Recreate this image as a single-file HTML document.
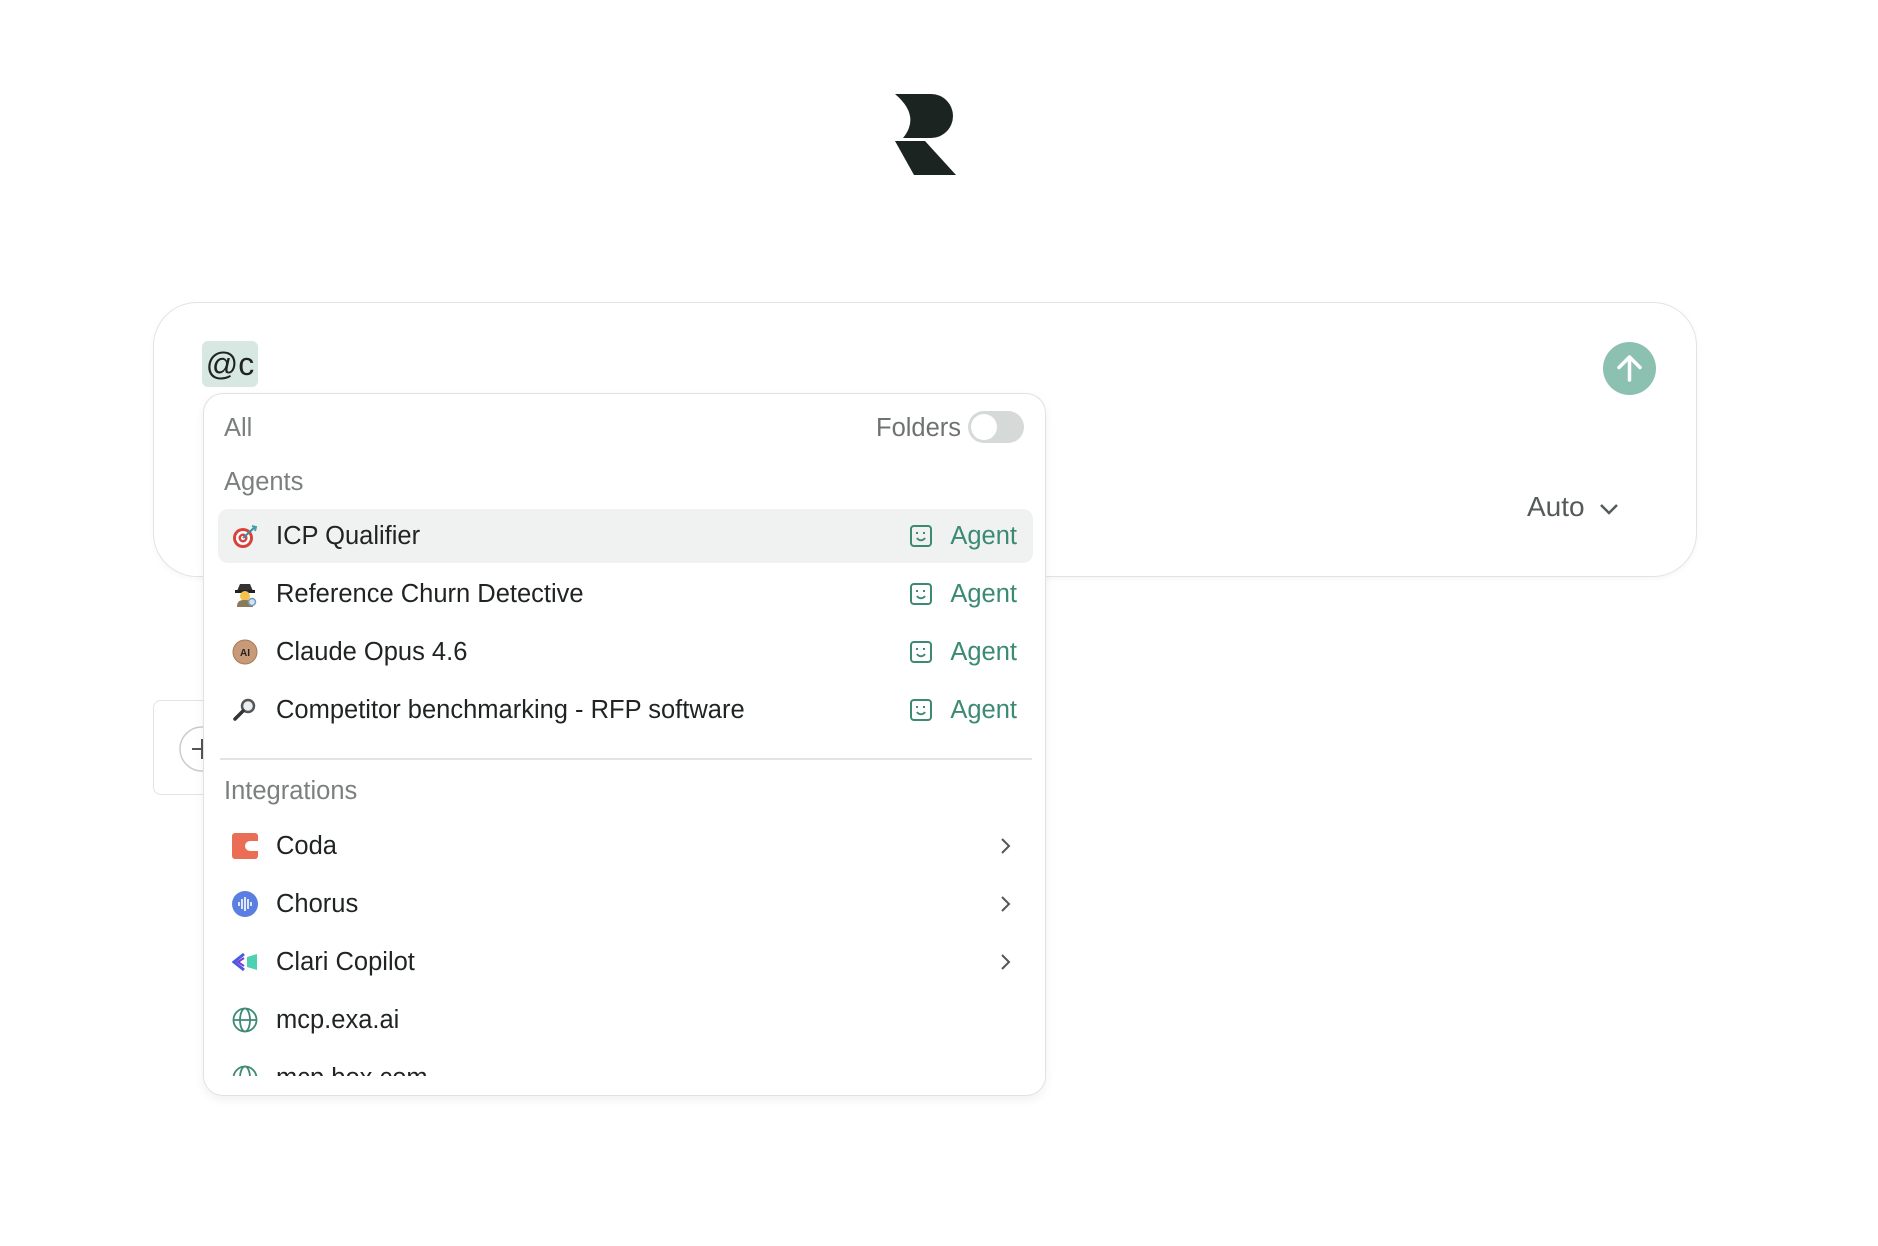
<!DOCTYPE html>
<html><head><meta charset="utf-8"><style>
*{box-sizing:border-box;margin:0;padding:0}
body{width:1878px;height:1246px;background:#fff;position:relative;overflow:hidden;font-family:"Liberation Sans",sans-serif;color:#1f2322}
.abs{position:absolute}
.main{left:153px;top:302px;width:1544px;height:275px;border:1.5px solid #e1e4e3;border-radius:44px;box-shadow:0 2px 6px rgba(0,0,0,.04)}
.chip{left:202px;top:341px;width:56px;height:46px;background:#d7e8e2;border-radius:6px;font-size:32px;line-height:46px;text-align:center;color:#1f2322}
.send{left:1603px;top:342px;width:53px;height:53px;border-radius:50%;background:#8cc0b0}
.auto{left:1527px;top:491px;font-size:28px;color:#555b59}
.back{left:153px;top:700px;width:60px;height:95px;border:1.5px solid #e1e4e3;border-radius:8px}
.dd{left:203px;top:393px;width:843px;height:703px;border:1.5px solid #dfe2e1;border-radius:20px;background:#fff;box-shadow:0 4px 10px rgba(0,0,0,.06);overflow:hidden}
.lbl{font-size:25.5px;color:#7b807e;position:absolute}
.row{position:absolute;left:14px;width:815px;height:54px}
.row.h{background:#f0f2f1;border-radius:10px}
.row .ic{position:absolute;left:14px;top:14px;width:26px;height:26px}
.row .t{position:absolute;left:58px;top:0;line-height:54px;font-size:25.5px;color:#1f2322}
.row .ag{position:absolute;right:16px;top:0;line-height:54px;font-size:25.5px;color:#3c8a74}
.row .agi{position:absolute;right:100px;top:15px}
.row .ch{position:absolute;right:22px;top:18px}
</style></head><body>
<svg class="abs" style="left:895px;top:94px" width="62" height="82" viewBox="0 0 62 82"><path d="M0 0H36A22 22 0 0 1 36 44H8Q26 22 0 0Z" fill="#1c2422"/><path d="M0 47H30L61 81H19Z" fill="#1c2422"/></svg>
<div class="abs main"></div>
<div class="abs chip">@c</div>
<div class="abs send"><svg width="53" height="53" viewBox="0 0 53 53"><path d="M26.5 38V15M16 25.5L26.5 15 37 25.5" stroke="#fff" stroke-width="3.5" fill="none" stroke-linecap="round" stroke-linejoin="round"/></svg></div>
<div class="abs auto">Auto <svg width="22" height="14" viewBox="0 0 22 14" style="margin-left:6px"><path d="M3 3l8 8 8-8" stroke="#555b59" stroke-width="2.5" fill="none"/></svg></div>
<div class="abs back"><svg class="abs" style="left:24px;top:24px" width="48" height="48" viewBox="0 0 48 48"><circle cx="24" cy="24" r="22" stroke="#c9cecc" stroke-width="1.5" fill="none"/><path d="M24 14v20M14 24h20" stroke="#555" stroke-width="2"/></svg></div>
<div class="abs dd">
<div class="lbl" style="left:20px;top:20px">All</div>
<div class="lbl" style="left:672px;top:20px;color:#6e7371">Folders</div>
<div class="abs" style="left:764px;top:17px;width:56px;height:32px;border-radius:16px;background:#d5d9d7"><div style="position:absolute;left:3px;top:3px;width:26px;height:26px;border-radius:50%;background:#fff"></div></div>
<div class="lbl" style="left:20px;top:74px">Agents</div>

<div class="row h" style="top:115px"><svg class="ic" viewBox="0 0 26 26"><circle cx="11" cy="15" r="10" fill="#d9423a"/><circle cx="11" cy="15" r="7" fill="#fff"/><circle cx="11" cy="15" r="4.5" fill="#d9423a"/><circle cx="11" cy="15" r="2" fill="#fff"/><path d="M11 15L23 4" stroke="#3a8fa0" stroke-width="2"/><path d="M20 3l4 1-1 4" stroke="#46a0b0" stroke-width="2" fill="none"/></svg><div class="t">ICP Qualifier</div><svg class="agi" width="24" height="24" viewBox="0 0 24 24"><rect x="2" y="2" width="20" height="20" rx="3" stroke="#3c8a74" stroke-width="2" fill="none"/><path d="M8 8v2M15 8v2M8 14c2 3 6 3 8 0" stroke="#3c8a74" stroke-width="2" fill="none"/></svg><div class="ag">Agent</div></div>
<div class="row" style="top:173px"><svg class="ic" viewBox="0 0 26 26"><path d="M5 10h16l-3-7h-10z" fill="#333"/><rect x="3" y="9" width="20" height="3" fill="#222"/><circle cx="13" cy="15" r="5" fill="#f2c14e"/><path d="M5 26c0-6 3-7 8-7s8 1 8 7z" fill="#8a7a5a"/><circle cx="20" cy="21" r="3.5" stroke="#6aa0c0" stroke-width="1.5" fill="#dde"/></svg><div class="t">Reference Churn Detective</div><svg class="agi" width="24" height="24" viewBox="0 0 24 24"><rect x="2" y="2" width="20" height="20" rx="3" stroke="#3c8a74" stroke-width="2" fill="none"/><path d="M8 8v2M15 8v2M8 14c2 3 6 3 8 0" stroke="#3c8a74" stroke-width="2" fill="none"/></svg><div class="ag">Agent</div></div>
<div class="row" style="top:231px"><svg class="ic" viewBox="0 0 26 26"><circle cx="13" cy="13" r="12" fill="#c99a78"/><circle cx="13" cy="13" r="12" stroke="#a57a5a" fill="none"/><text x="13" y="17" font-size="10" font-weight="bold" text-anchor="middle" fill="#222" font-family="Liberation Sans">AI</text></svg><div class="t">Claude Opus 4.6</div><svg class="agi" width="24" height="24" viewBox="0 0 24 24"><rect x="2" y="2" width="20" height="20" rx="3" stroke="#3c8a74" stroke-width="2" fill="none"/><path d="M8 8v2M15 8v2M8 14c2 3 6 3 8 0" stroke="#3c8a74" stroke-width="2" fill="none"/></svg><div class="ag">Agent</div></div>
<div class="row" style="top:289px"><svg class="ic" viewBox="0 0 26 26"><circle cx="16" cy="9" r="6" stroke="#555" stroke-width="2.5" fill="#e8eef2"/><path d="M11 14L3 22" stroke="#333" stroke-width="3.5" stroke-linecap="round"/></svg><div class="t">Competitor benchmarking - RFP software</div><svg class="agi" width="24" height="24" viewBox="0 0 24 24"><rect x="2" y="2" width="20" height="20" rx="3" stroke="#3c8a74" stroke-width="2" fill="none"/><path d="M8 8v2M15 8v2M8 14c2 3 6 3 8 0" stroke="#3c8a74" stroke-width="2" fill="none"/></svg><div class="ag">Agent</div></div>

<div class="abs" style="left:16px;top:364px;width:812px;height:1.5px;background:#e1e4e3"></div>
<div class="lbl" style="left:20px;top:383px">Integrations</div>

<div class="row" style="top:425px"><svg class="ic" viewBox="0 0 26 26"><rect x="0" y="0" width="26" height="26" rx="3" fill="#ea6e55"/><path d="M26 8h-8a5 5 0 0 0 0 10h8z" fill="#fff"/></svg><div class="t">Coda</div><svg class="ch" width="12" height="18" viewBox="0 0 12 18"><path d="M3 2l7 7-7 7" stroke="#555" stroke-width="2" fill="none"/></svg></div>
<div class="row" style="top:483px"><svg class="ic" viewBox="0 0 26 26"><circle cx="13" cy="13" r="13" fill="#5b7fe0"/><path d="M7 11v4M10 8v10M13 6v14M16 8v10M19 11v4" stroke="#fff" stroke-width="1.6"/></svg><div class="t">Chorus</div><svg class="ch" width="12" height="18" viewBox="0 0 12 18"><path d="M3 2l7 7-7 7" stroke="#555" stroke-width="2" fill="none"/></svg></div>
<div class="row" style="top:541px"><svg class="ic" viewBox="0 0 26 26"><path d="M12 5L2 13l10 8" stroke="#4a5ae8" stroke-width="3" fill="none"/><path d="M12 9l-6 4 6 4" stroke="#7a3fd0" stroke-width="2" fill="none"/><path d="M15 8l10-3v16l-10-3z" fill="#4fd0b0"/></svg><div class="t">Clari Copilot</div><svg class="ch" width="12" height="18" viewBox="0 0 12 18"><path d="M3 2l7 7-7 7" stroke="#555" stroke-width="2" fill="none"/></svg></div>
<div class="row" style="top:599px"><svg class="ic" viewBox="0 0 26 26"><g stroke="#3c8a74" stroke-width="1.8" fill="none"><circle cx="13" cy="13" r="11.5"/><ellipse cx="13" cy="13" rx="5" ry="11.5"/><path d="M1.5 13h23"/></g></svg><div class="t">mcp.exa.ai</div></div>
<div class="row" style="top:657px"><svg class="ic" viewBox="0 0 26 26"><g stroke="#3c8a74" stroke-width="1.8" fill="none"><circle cx="13" cy="13" r="11.5"/><ellipse cx="13" cy="13" rx="5" ry="11.5"/><path d="M1.5 13h23"/></g></svg><div class="t">mcp.box.com</div></div>
<div class="abs" style="left:0;top:682px;width:843px;height:21px;background:#fff"></div>
</div>
</body></html>
